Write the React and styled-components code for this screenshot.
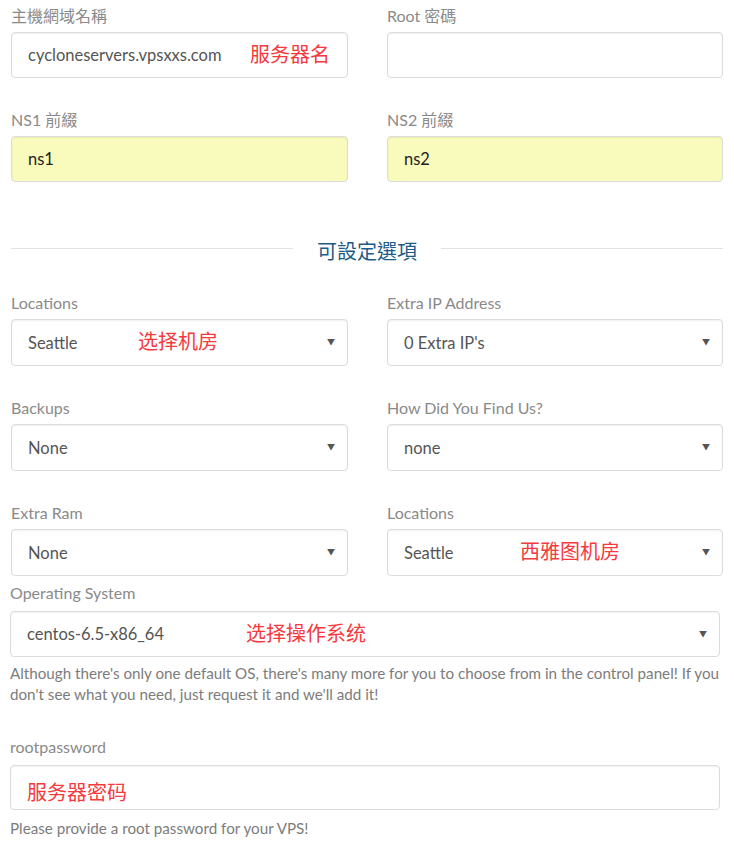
import React from 'react'
import styled, { createGlobalStyle } from 'styled-components'

const GlobalStyle = createGlobalStyle`
  body {
    margin: 0;
    background: #fff;
    font-family: Lato, "Noto Sans CJK TC", sans-serif;
  }
`

const Page = styled.div`
  width: 734px;
  height: 846px;
  overflow: hidden;
  box-sizing: border-box;
  padding: 5px 11px 0 11px;
`

const Grid = styled.div`
  display: grid;
  grid-template-columns: 337px 336px;
  column-gap: 39px;
  row-gap: 31px;
`

const Field = styled.div`
  display: flex;
  flex-direction: column;
`

const Label = styled.label`
  font-size: 16px;
  line-height: 22px;
  color: #8a8a8a;
  margin-bottom: ${props => props.gap || 5}px;
`

const Box = styled.div`
  position: relative;
  box-sizing: border-box;
  height: ${props => props.h || 46}px;
  display: flex;
  align-items: center;
  padding: 0 16px;
  border: 1px solid #dcdcdc;
  border-radius: 4px;
  box-shadow: inset 0 1px 2px rgba(0, 0, 0, 0.06);
  background: ${props => (props.filled ? '#f9fbbd' : '#fff')};
  font-size: 16.5px;
  color: ${props => (props.filled ? '#222' : '#555')};
`

const Note = styled.span`
  position: absolute;
  left: ${props => props.left}px;
  top: ${props => props.top || 7}px;
  font-family: "Noto Sans CJK SC", sans-serif;
  font-size: 20px;
  line-height: 28px;
  color: #f5393d;
`

const Arrow = styled.span`
  position: absolute;
  right: 12px;
  top: 16px;
  font-size: 8px;
  color: #555;
`

const Divider = styled.div`
  display: flex;
  align-items: center;
  margin: 51px 0 29px;
  height: 30px;
`

const Line = styled.div`
  flex: 1;
  height: 1px;
  background: #e2e2e2;
`

const Heading = styled.h3`
  margin: 0 24px;
  font-weight: normal;
  font-size: 20px;
  color: #1d5b88;
  line-height: 30px;
  position: relative;
  top: 3px;
`

const Wide = styled.div`
  margin: ${props => props.top || 0}px 3px 0 -1px;
  display: flex;
  flex-direction: column;
`

const Help = styled.p`
  margin: ${props => props.gap || 6}px 0 0;
  font-size: 15.2px;
  line-height: 21px;
  color: #7c7c7c;
`

const Select = ({ value, note, noteLeft, h }) => (
  <Box h={h}>
    {value}
    {note && <Note left={noteLeft}>{note}</Note>}
    <Arrow>▼</Arrow>
  </Box>
)

export default function App() {
  return (
    <>
      <GlobalStyle />
      <Page>
        <Grid>
          <Field>
            <Label>主機網域名稱</Label>
            <Box>
              cycloneservers.vpsxxs.com
              <Note left={238}>服务器名</Note>
            </Box>
          </Field>
          <Field>
            <Label>Root 密碼</Label>
            <Box />
          </Field>
          <Field>
            <Label>NS1 前綴</Label>
            <Box filled>ns1</Box>
          </Field>
          <Field>
            <Label>NS2 前綴</Label>
            <Box filled>ns2</Box>
          </Field>
        </Grid>

        <Divider>
          <Line />
          <Heading>可設定選項</Heading>
          <Line />
        </Divider>

        <Grid>
          <Field>
            <Label>Locations</Label>
            <Select h={47} value="Seattle" note="选择机房" noteLeft={126} />
          </Field>
          <Field>
            <Label>Extra IP Address</Label>
            <Select h={47} value="0 Extra IP's" />
          </Field>
          <Field>
            <Label>Backups</Label>
            <Select h={47} value="None" />
          </Field>
          <Field>
            <Label>How Did You Find Us?</Label>
            <Select h={47} value="none" />
          </Field>
          <Field>
            <Label>Extra Ram</Label>
            <Select h={47} value="None" />
          </Field>
          <Field>
            <Label>Locations</Label>
            <Select h={47} value="Seattle" note="西雅图机房" noteLeft={132} />
          </Field>
        </Grid>

        <Wide top={6}>
          <Label gap={7}>Operating System</Label>
          <Select value="centos-6.5-x86_64" note="选择操作系统" noteLeft={235} />
          <Help>
            Although there's only one default OS, there's many more for you to choose from in the
            control panel! If you don't see what you need, just request it and we'll add it!
          </Help>
        </Wide>

        <Wide top={31}>
          <Label gap={7}>rootpassword</Label>
          <Box h={45}>
            <Note left={16} top={12}>服务器密码</Note>
          </Box>
          <Help gap={8}>Please provide a root password for your VPS!</Help>
        </Wide>
      </Page>
    </>
  )
}
